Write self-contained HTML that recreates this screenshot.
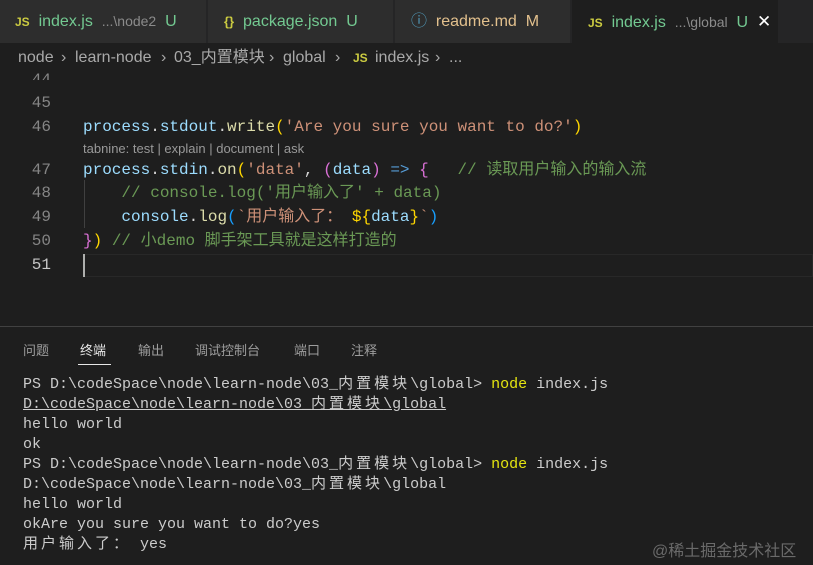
<!DOCTYPE html>
<html><head><meta charset="utf-8"><style>
*{margin:0;padding:0;box-sizing:border-box}
body{width:813px;height:565px;background:#1e1e1e;overflow:hidden;position:relative;font-family:"Liberation Sans","Noto Sans CJK SC",sans-serif;color:#ccc}
.abs{position:absolute;white-space:pre}
.tabbar{position:absolute;left:0;top:0;width:813px;height:43px;background:#252526}
.tab{position:absolute;top:0;height:43px;background:#2d2d2d;border-right:1px solid #252526;font-size:16px;line-height:43px;white-space:pre}
.js{color:#cbcb41;font-weight:bold;font-size:12px}
.g{color:#73c991}.d{color:#8b8b8b;font-size:14px}
.crumb{position:absolute;top:43px;height:29px;line-height:29px;font-size:16px;color:#a9a9a9;white-space:pre}
.ln{position:absolute;left:0;width:51px;text-align:right;font-family:"Liberation Mono",monospace;font-size:16px;color:#858585}
.code{position:absolute;left:83px;font-family:"Liberation Mono","Noto Sans CJK SC",monospace;font-size:16px;white-space:pre;color:#d4d4d4}
.v{color:#9cdcfe}.f{color:#dcdcaa}.y{color:#ffd700}.s{color:#ce9178}.c{color:#6a9955}.k{color:#569cd6}.p{color:#da70d6}.b{color:#179fff}
.term{position:absolute;left:23px;font-family:"Liberation Mono","Noto Sans CJK SC",monospace;font-size:15px;color:#cccccc;white-space:pre;line-height:20px}
.cj{letter-spacing:3px}
.pt{position:absolute;top:340px;font-size:13px;color:#9d9d9d}
</style></head><body>
<div class="tabbar"></div>
<div class="tab" style="left:0;width:207px;padding-left:15px"><span class="js">JS</span>  <span class="g">index.js</span>  <span class="d">...\node2</span>  <span class="g">U</span></div>
<div class="tab" style="left:208px;width:186px;padding-left:16px"><span style="color:#cbcb41;font-weight:bold;font-size:13px">{}</span>  <span class="g">package.json</span>  <span class="g">U</span></div>
<div class="tab" style="left:395px;width:176px;padding-left:16px"><span style="color:#519aba">ⓘ</span>  <span style="color:#e2c08d">readme.md</span>  <span style="color:#e2c08d">M</span></div>
<div class="tab" style="left:572px;width:207px;padding-left:16px;background:#1e1e1e"><span class="js">JS</span>  <span class="g">index.js</span>  <span class="d">...\global</span>  <span class="g">U</span>  <span style="color:#fff;font-size:17px">✕</span></div>
<div class="crumb" style="left:18px">node</div>
<div class="crumb" style="left:61px">›</div>
<div class="crumb" style="left:75px">learn-node</div>
<div class="crumb" style="left:161px">›</div>
<div class="crumb" style="left:174px">03_内置模块</div>
<div class="crumb" style="left:269px">›</div>
<div class="crumb" style="left:283px">global</div>
<div class="crumb" style="left:335px">›</div>
<div class="crumb" style="left:353px"><span class="js">JS</span></div>
<div class="crumb" style="left:375px">index.js</div>
<div class="crumb" style="left:435px">›</div>
<div class="crumb" style="left:449px">...</div>

<div class="ln" style="top:68px;height:12px;overflow:hidden;line-height:24px">44</div>
<div class="ln" style="top:91px;line-height:24px">45</div>
<div class="ln" style="top:115px;line-height:24px">46</div>
<div class="ln" style="top:158px;line-height:24px">47</div>
<div class="ln" style="top:181px;line-height:24px">48</div>
<div class="ln" style="top:205px;line-height:24px">49</div>
<div class="ln" style="top:229px;line-height:24px">50</div>
<div class="ln" style="top:253px;line-height:24px;color:#c6c6c6">51</div>

<div class="code" style="top:115px;line-height:24px"><span class="v">process</span>.<span class="v">stdout</span>.<span class="f">write</span><span class="y">(</span><span class="s">'Are you sure you want to do?'</span><span class="y">)</span></div>
<div class="abs" style="left:83px;top:141px;font-size:13px;color:#999">tabnine: test | explain | document | ask</div>
<div class="code" style="top:158px;line-height:24px"><span class="v">process</span>.<span class="v">stdin</span>.<span class="f">on</span><span class="y">(</span><span class="s">'data'</span>, <span class="p">(</span><span class="v">data</span><span class="p">)</span> <span class="k">=&gt;</span> <span class="p">{</span>   <span class="c">// 读取用户输入的输入流</span></div>
<div class="code" style="top:181px;line-height:24px">    <span class="c">// console.log('用户输入了' + data)</span></div>
<div class="code" style="top:205px;line-height:24px">    <span class="v">console</span>.<span class="f">log</span><span class="b">(</span><span class="s">`用户输入了： </span><span class="y">${</span><span class="v">data</span><span class="y">}</span><span class="s">`</span><span class="b">)</span></div>
<div class="code" style="top:229px;line-height:24px"><span class="p">}</span><span class="y">)</span> <span class="c">// 小demo 脚手架工具就是这样打造的</span></div>
<div style="position:absolute;left:84px;top:180px;width:1px;height:48px;background:#404040"></div>
<div style="position:absolute;left:85px;top:254px;width:728px;height:23px;border:1px solid #282828;border-left:none"></div>
<div style="position:absolute;left:83px;top:254px;width:2px;height:23px;background:#aeafad"></div>

<div style="position:absolute;left:0;top:326px;width:813px;height:1px;background:#414141"></div>
<div class="pt" style="left:23px">问题</div>
<div class="pt" style="left:80px;color:#e7e7e7">终端</div>
<div style="position:absolute;left:78px;top:364px;width:33px;height:1px;background:#e7e7e7"></div>
<div class="pt" style="left:138px">输出</div>
<div class="pt" style="left:195px">调试控制台</div>
<div class="pt" style="left:294px">端口</div>
<div class="pt" style="left:351px">注释</div>

<div class="term" style="top:375px">PS D:\codeSpace\node\learn-node\03_<span class="cj">内置模块</span>\global&gt; <span style="color:#e5e510">node</span> index.js
<span style="text-decoration:underline">D:\codeSpace\node\learn-node\03_<span class="cj">内置模块</span>\global</span>
hello world
ok
PS D:\codeSpace\node\learn-node\03_<span class="cj">内置模块</span>\global&gt; <span style="color:#e5e510">node</span> index.js
D:\codeSpace\node\learn-node\03_<span class="cj">内置模块</span>\global
hello world
okAre you sure you want to do?yes
<span class="cj">用户输入了：</span> yes</div>
<div class="abs" style="left:652px;top:537px;font-size:16px;color:#6a6a6a">@稀土掘金技术社区</div>
</body></html>
